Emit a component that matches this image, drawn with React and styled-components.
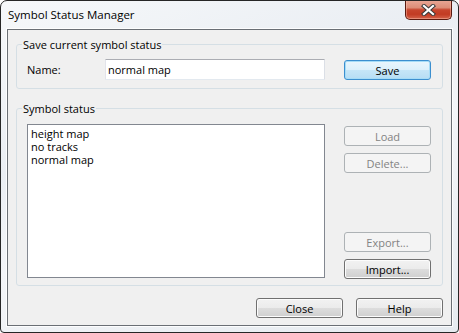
import React from "react";
import styled, { createGlobalStyle, css } from "styled-components";

const Global = createGlobalStyle`
  html, body { margin: 0; padding: 0; background: #ffffff; }
  body {
    font-family: "Segoe UI", "Open Sans", "Noto Sans", sans-serif;
    font-size: 11px;
    color: #000;
  }
  * { box-sizing: border-box; }
`;

const Window = styled.div`
  width: 459px;
  height: 333px;
  border: 1px solid #262626;
  border-radius: 7px 7px 4px 4px;
  background: linear-gradient(160deg, #f6f8fa 0%, #eaeef3 35%, #f3f5f8 55%, #e6ebf0 100%);
  display: flex;
  flex-direction: column;
  overflow: hidden;
`;

const TitleBar = styled.div`
  height: 28px;
  flex: 0 0 28px;
  display: flex;
  justify-content: space-between;
  align-items: flex-start;
  padding-left: 7px;
`;

const Title = styled.div`
  margin-top: 6px;
  font-size: 11.5px;
  line-height: 16px;
  color: #000;
`;

const CloseX = styled.div`
  width: 47px;
  height: 20px;
  margin-top: -1px;
  margin-right: 6px;
  border: 1px solid #5a1a10;
  border-top: none;
  border-radius: 0 0 5px 5px;
  background: linear-gradient(
    to bottom,
    #e9a897 0%,
    #dd8e78 40%,
    #c7452d 52%,
    #c23b23 75%,
    #d4624a 100%
  );
  box-shadow: inset 0 0 0 1px rgba(255, 200, 180, 0.45);
  display: flex;
  align-items: center;
  justify-content: center;
`;

const Client = styled.div`
  flex: 1;
  margin: 0 6px 6px 6px;
  border: 1px solid #6a6f75;
  background: #f0f0f0;
  box-shadow: 0 0 0 1px rgba(255, 255, 255, 0.85);
  display: flex;
  flex-direction: column;
  padding: 6px 8px 7px 8px;
`;

const Group = styled.fieldset`
  margin: ${(p) => (p.$first ? "0" : "11px 0 0 0")};
  padding: 0;
  border: 1px solid #d5dfe5;
  border-radius: 3px;
  min-width: 0;
`;

const Legend = styled.legend`
  margin-left: 5px;
  padding: 0 1px;
  line-height: 17px;
  height: 17px;
  color: #000;
`;

const GroupBody = styled.div`
  display: flex;
  padding: ${(p) => p.$pad};
`;

const NameRow = styled.div`
  display: flex;
  align-items: flex-end;
  width: 100%;
`;

const Label = styled.label`
  width: 78px;
  align-self: center;
  line-height: 13px;
`;

const TextInput = styled.div`
  width: 220px;
  height: 21px;
  border: 1px solid;
  border-color: #abadb3 #dbdfe6 #e3e9ef #e2e3ea;
  border-radius: 1px;
  background: #fff;
  padding: 0 2px;
  display: flex;
  align-items: center;
  line-height: 13px;
`;

const ListBox = styled.div`
  width: 298px;
  height: 154px;
  border: 1px solid #828790;
  background: #fff;
  padding: 2px 3px;
`;

const ListItem = styled.div`
  height: 13px;
  line-height: 13px;
  white-space: nowrap;
`;

const ButtonColumn = styled.div`
  margin-left: 19px;
  padding-top: 2px;
  margin-bottom: -1px;
  display: flex;
  flex-direction: column;
  justify-content: space-between;
`;

const ButtonStack = styled.div`
  display: flex;
  flex-direction: column;
  gap: 7px;
`;

const Button = styled.div`
  width: 87px;
  height: 20px;
  margin-left: ${(p) => (p.$push ? "auto" : "0")};
  border: 1px solid #707070;
  border-radius: 3px;
  background: linear-gradient(to bottom, #f2f2f2 0%, #ebebeb 50%, #dddddd 50%, #cfcfcf 100%);
  box-shadow: inset 0 0 0 1px #fcfcfc;
  display: flex;
  align-items: center;
  justify-content: center;
  line-height: 13px;
  color: #000;
  ${(p) =>
    p.$default &&
    css`
      border-color: #3c8fcf;
      background: linear-gradient(to bottom, #eaf6fd 0%, #dcf0fb 50%, #c6e6f8 50%, #b6ddf4 100%);
      box-shadow: inset 0 0 0 1px #a6dcf7;
    `}
  ${(p) =>
    p.$disabled &&
    css`
      border-color: #adb2b5;
      background: #f4f4f4;
      box-shadow: none;
      color: #838383;
    `}
`;

const Footer = styled.div`
  margin-top: 12px;
  display: flex;
  justify-content: flex-end;
  gap: 13px;
`;

function CloseGlyph() {
  return (
    <svg width="15" height="12" viewBox="0 0 15 12">
      <path d="M3 2 L12 10 M12 2 L3 10" stroke="#3a3a3a" strokeWidth="4.2" strokeLinecap="square" />
      <path d="M3 2 L12 10 M12 2 L3 10" stroke="#ffffff" strokeWidth="2.2" strokeLinecap="square" />
    </svg>
  );
}

export default function App() {
  return (
    <>
      <Global />
      <Window>
        <TitleBar>
          <Title>Symbol Status Manager</Title>
          <CloseX>
            <CloseGlyph />
          </CloseX>
        </TitleBar>
        <Client>
          <Group $first>
            <Legend>Save current symbol status</Legend>
            <GroupBody $pad="6px 11px 8px 10px">
              <NameRow>
                <Label>Name:</Label>
                <TextInput>normal map</TextInput>
                <Button $push $default>Save</Button>
              </NameRow>
            </GroupBody>
          </Group>
          <Group>
            <Legend>Symbol status</Legend>
            <GroupBody $pad="7px 11px 7px 10px">
              <ListBox>
                <ListItem>height map</ListItem>
                <ListItem>no tracks</ListItem>
                <ListItem>normal map</ListItem>
              </ListBox>
              <ButtonColumn>
                <ButtonStack>
                  <Button $disabled>Load</Button>
                  <Button $disabled>Delete...</Button>
                </ButtonStack>
                <ButtonStack>
                  <Button $disabled>Export...</Button>
                  <Button>Import...</Button>
                </ButtonStack>
              </ButtonColumn>
            </GroupBody>
          </Group>
          <Footer>
            <Button>Close</Button>
            <Button>Help</Button>
          </Footer>
        </Client>
      </Window>
    </>
  );
}
